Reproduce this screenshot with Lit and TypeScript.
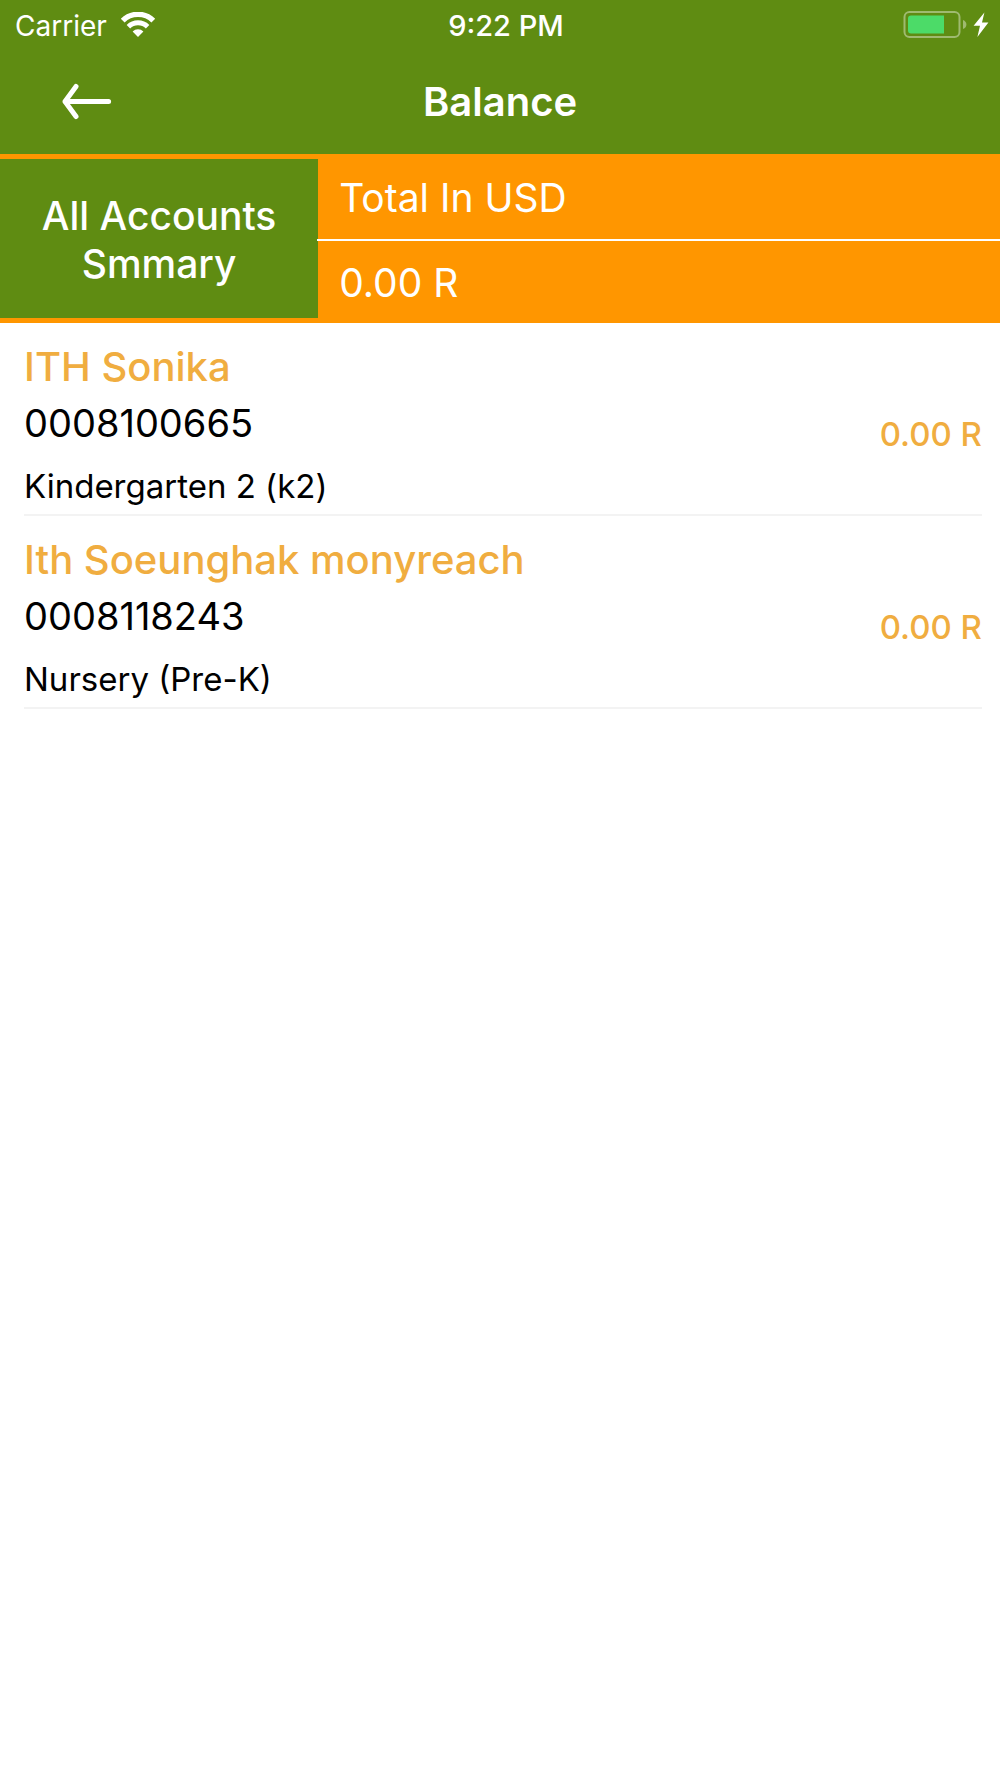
import { LitElement, html, css } from "lit";
import { customElement, property, state } from "lit/decorators.js";

interface Account {
  name: string;
  number: string;
  grade: string;
  balance: string;
}

@customElement("status-bar")
class StatusBar extends LitElement {
  static styles = css`
    :host {
      display: grid;
      grid-template-columns: 1fr auto 1fr;
      align-items: center;
      height: 50px;
      padding: 0 11px 0 15px;
      font-size: 28px;
      line-height: 34px;
      color: #fff;
    }
    .side {
      display: flex;
      align-items: center;
      gap: 13px;
    }
    .end {
      justify-content: flex-end;
      gap: 6px;
    }
    .carrier,
    .time {
      padding-top: 2px;
    }
    .time {
      font-size: 29px;
      font-weight: 500;
      padding-left: 8px;
    }
    svg {
      display: block;
    }
  `;

  render() {
    return html`
      <div class="side">
        <span class="carrier">Carrier</span>
        <svg width="36" height="26" viewBox="0 0 36 26" role="img" aria-label="Wi-Fi">
          <g fill="none" stroke="#fff">
            <path d="M2.7 8.6A21.8 21.8 0 0 1 33.3 8.6" stroke-width="5.4" />
            <path d="M8.4 14.7A13.8 13.8 0 0 1 27.6 14.7" stroke-width="5" />
          </g>
          <path d="M12.6 19.4A7.8 7.8 0 0 1 23.4 19.4L18 25Z" fill="#fff" />
        </svg>
      </div>
      <span class="time">9:22 PM</span>
      <div class="side end">
        <svg width="64" height="28" viewBox="0 0 64 28" role="img" aria-label="Battery">
          <rect x="1.5" y="1" width="55" height="25" rx="5" fill="none" stroke="#fff" stroke-opacity=".4" stroke-width="2" />
          <path d="M60 9Q63.4 10.5 63.4 13.5T60 18Z" fill="#fff" fill-opacity=".4" />
          <path d="M8 4.5H41V22.5H8Q5 22.5 5 19.5V7.5Q5 4.5 8 4.5Z" fill="#4cdb68" />
        </svg>
        <svg width="16" height="26" viewBox="0 0 16 26" role="img" aria-label="Charging">
          <path d="M11.4 .4L.6 13.8H7L4.4 25L15.4 10.4H9Z" fill="#fff" />
        </svg>
      </div>
    `;
  }
}

@customElement("nav-bar")
class NavBar extends LitElement {
  @property() heading = "";

  static styles = css`
    :host {
      display: grid;
      grid-template-columns: 1fr auto 1fr;
      align-items: center;
      height: 104px;
      color: #fff;
    }
    .back {
      justify-self: start;
      display: flex;
      align-items: center;
      margin: 0 0 0 48px;
      padding: 12px;
      border: 0;
      background: none;
      cursor: pointer;
    }
    h1 {
      margin: 0;
      font-size: 40px;
      line-height: 48px;
      font-weight: 600;
    }
  `;

  render() {
    return html`
      <button class="back" aria-label="Back">
        <svg width="54" height="40" viewBox="0 0 54 40" fill="none" stroke="#fff" stroke-width="5" stroke-linecap="round" stroke-linejoin="round">
          <path d="M16 4.5L5 19.5L16 34.5M5 19.5H48.6" />
        </svg>
      </button>
      <h1>${this.heading}</h1>
    `;
  }
}

@customElement("account-summary")
class AccountSummary extends LitElement {
  @property() currency = "";
  @property() total = "";

  static styles = css`
    :host {
      display: grid;
      grid-template-columns: 7fr 15fr;
      background: #ff9600;
      color: #fff;
      font-size: 39px;
      line-height: 48px;
    }
    .title {
      display: flex;
      align-items: center;
      justify-content: center;
      margin: 5px 0;
      padding: 2px 32px 0;
      background: #5f8c12;
      font-weight: 500;
      text-align: center;
    }
    .cell {
      margin-left: -1px;
      padding: 20px 22px 17px;
    }
    .cell + .cell {
      border-top: 2px solid #fff;
      padding: 18px 22px 16px;
    }
  `;

  render() {
    return html`
      <div class="title">All Accounts Smmary</div>
      <div>
        <div class="cell">${this.currency}</div>
        <div class="cell">${this.total}</div>
      </div>
    `;
  }
}

@customElement("account-row")
class AccountRow extends LitElement {
  @property({ attribute: false }) account!: Account;

  static styles = css`
    :host {
      display: flex;
      justify-content: space-between;
      margin: 0 18px 0 24px;
      padding: 20px 0 8px;
      border-bottom: 2px solid #f3f3f3;
      color: #000;
    }
    h2,
    p {
      margin: 0;
    }
    h2 {
      font-size: 40px;
      line-height: 48px;
      font-weight: 500;
      color: #f0ad40;
    }
    .number {
      margin-top: 9px;
      font-size: 38px;
      line-height: 46px;
    }
    .grade {
      margin-top: 20px;
      font-size: 33px;
      line-height: 40px;
    }
    .balance {
      padding-top: 71px;
      font-size: 33px;
      line-height: 40px;
      font-weight: 500;
      color: #f0ad40;
      white-space: nowrap;
    }
  `;

  render() {
    const { name, number, grade, balance } = this.account;
    return html`
      <div>
        <h2>${name}</h2>
        <p class="number">${number}</p>
        <p class="grade">${grade}</p>
      </div>
      <p class="balance">${balance}</p>
    `;
  }
}

@customElement("app-root")
class AppRoot extends LitElement {
  @state() private accounts: Account[] = [
    { name: "ITH Sonika", number: "0008100665", grade: "Kindergarten 2 (k2)", balance: "0.00 R" },
    { name: "Ith Soeunghak monyreach", number: "0008118243", grade: "Nursery (Pre-K)", balance: "0.00 R" },
  ];

  static styles = css`
    :host {
      display: block;
      min-height: 100vh;
      background: #fff;
      font-family: Inter, "Liberation Sans", sans-serif;
    }
    header {
      background: #5f8c12;
    }
  `;

  render() {
    return html`
      <header>
        <status-bar></status-bar>
        <nav-bar heading="Balance"></nav-bar>
      </header>
      <main>
        <account-summary currency="Total In USD" total="0.00 R"></account-summary>
        ${this.accounts.map((a) => html`<account-row .account=${a}></account-row>`)}
      </main>
    `;
  }
}
